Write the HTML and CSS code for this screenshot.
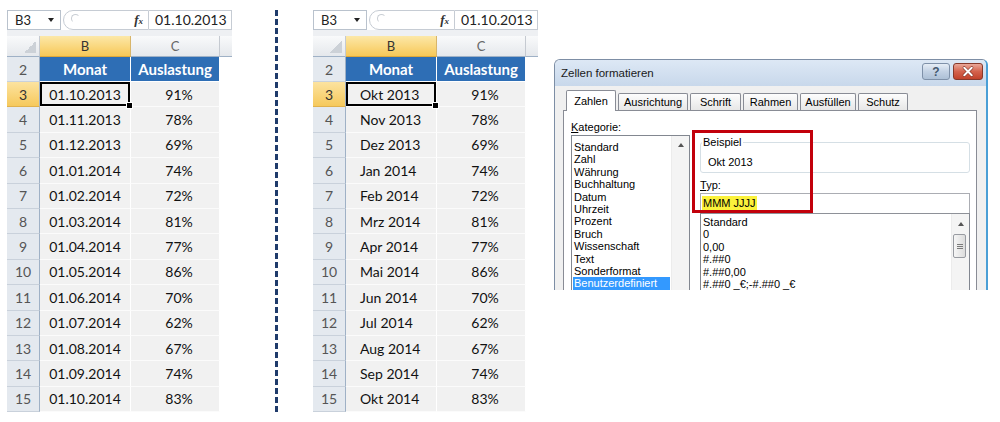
FILE: index.html
```html
<!DOCTYPE html>
<html>
<head>
    <title>Benutzerdefiniertes Datumsformat</title>
    <link rel="stylesheet" href="styles.css">
</head>
<body>
    <div class="page">
        <div class="sheet">
            <div class="formula-bar">
                <div class="name-box">B3<span class="name-arrow"></span></div>
                <div class="fx-area"><span class="knob"></span><span class="fx">f<small>x</small></span></div>
                <div class="formula-text">01.10.2013</div>
            </div>
            <div class="grid" id="sheetDates">
                <div class="col-head corner"></div>
                <div class="col-head active">B</div>
                <div class="col-head">C</div>
                <div class="col-head rest"></div>
                <div class="row-head">2</div>
                <div class="head-cell">Monat</div>
                <div class="head-cell">Auslastung</div>
                <div class="cell rest"></div>
            </div>
        </div>

        <div class="divider"></div>

        <div class="sheet">
            <div class="formula-bar">
                <div class="name-box">B3<span class="name-arrow"></span></div>
                <div class="fx-area"><span class="knob"></span><span class="fx">f<small>x</small></span></div>
                <div class="formula-text">01.10.2013</div>
            </div>
            <div class="grid" id="sheetMonths">
                <div class="col-head corner"></div>
                <div class="col-head active">B</div>
                <div class="col-head">C</div>
                <div class="col-head rest"></div>
                <div class="row-head">2</div>
                <div class="head-cell">Monat</div>
                <div class="head-cell">Auslastung</div>
                <div class="cell rest"></div>
            </div>
        </div>

        <div class="dialog">
            <div class="title-bar">
                <span class="title">Zellen formatieren</span>
                <div class="title-buttons">
                    <span class="tbtn help">?</span>
                    <span class="tbtn close">
                        <svg width="30" height="17" viewBox="0 0 30 17">
                            <path d="M11 4.5 L19 12.5 M19 4.5 L11 12.5" stroke="#7a2a1c" stroke-width="3.4" stroke-linecap="round"/>
                            <path d="M11 4.5 L19 12.5 M19 4.5 L11 12.5" stroke="#fff" stroke-width="2.2" stroke-linecap="round"/>
                        </svg>
                    </span>
                </div>
            </div>
            <div class="dialog-body">
                <div class="tabs">
                    <div class="tab selected" style="width: 50px">Zahlen</div>
                    <div class="tab" style="width: 70px">Ausrichtung</div>
                    <div class="tab" style="width: 51px">Schrift</div>
                    <div class="tab" style="width: 55px">Rahmen</div>
                    <div class="tab" style="width: 56px">Ausfüllen</div>
                    <div class="tab" style="width: 50px">Schutz</div>
                </div>
                <div class="panel">
                    <div class="cat-col">
                        <div class="label"><u>K</u>ategorie:</div>
                        <div class="listbox">
                            <div class="list-items cat-items">
                                <div class="item">Standard</div>
                                <div class="item">Zahl</div>
                                <div class="item">Währung</div>
                                <div class="item">Buchhaltung</div>
                                <div class="item">Datum</div>
                                <div class="item">Uhrzeit</div>
                                <div class="item">Prozent</div>
                                <div class="item">Bruch</div>
                                <div class="item">Wissenschaft</div>
                                <div class="item">Text</div>
                                <div class="item">Sonderformat</div>
                                <div class="item selected">Benutzerdefiniert</div>
                            </div>
                            <div class="scrollbar">
                                <div class="scroll-btn"><span class="arrow-up"></span></div>
                            </div>
                        </div>
                    </div>
                    <div class="type-col">
                        <fieldset class="sample">
                            <legend>Beispiel</legend>
                            <div class="sample-text">Okt 2013</div>
                        </fieldset>
                        <div class="label type-label"><u>T</u>yp:</div>
                        <div class="type-input"><span class="marker">MMM JJJJ</span></div>
                        <div class="listbox type-list">
                            <div class="list-items type-items">
                                <div class="item">Standard</div>
                                <div class="item">0</div>
                                <div class="item">0,00</div>
                                <div class="item">#.##0</div>
                                <div class="item">#.##0,00</div>
                                <div class="item">#.##0 _€;-#.##0 _€</div>
                            </div>
                            <div class="scrollbar">
                                <div class="scroll-btn"><span class="arrow-up"></span></div>
                                <div class="thumb"><span></span><span></span><span></span></div>
                            </div>
                        </div>
                    </div>
                    <div class="callout"></div>
                </div>
            </div>
        </div>
    </div>

    <script>
        const dates = ['01.10.2013', '01.11.2013', '01.12.2013', '01.01.2014', '01.02.2014', '01.03.2014',
            '01.04.2014', '01.05.2014', '01.06.2014', '01.07.2014', '01.08.2014', '01.09.2014', '01.10.2014'];
        const months = ['Okt 2013', 'Nov 2013', 'Dez 2013', 'Jan 2014', 'Feb 2014', 'Mrz 2014',
            'Apr 2014', 'Mai 2014', 'Jun 2014', 'Jul 2014', 'Aug 2014', 'Sep 2014', 'Okt 2014'];
        const load = [91, 78, 69, 74, 72, 81, 77, 86, 70, 62, 67, 74, 83];

        function buildRows(gridId, labels, align) {
            let html = '';
            labels.forEach((label, i) => {
                const row = i + 3;
                const active = row === 3;
                html += `
                    <div class="row-head${active ? ' active' : ''}">${row}</div>
                    <div class="cell ${align}${active ? ' selected' : ''}">${label}</div>
                    <div class="cell pct">${load[i]}%</div>
                    <div class="cell rest"></div>`;
            });
            document.getElementById(gridId).insertAdjacentHTML('beforeend', html);
        }

        buildRows('sheetDates', dates, 'center');
        buildRows('sheetMonths', months, 'left');
    </script>
</body>
</html>
```

FILE: styles.css
```css
body {
    margin: 0;
    padding: 0;
    background-color: #fff;
    font-family: "Liberation Sans", Arial, sans-serif;
}

.page {
    display: flex;
    align-items: flex-start;
    padding: 10px 0 0 7px;
}

/* spreadsheet */

.sheet {
    width: 225px;
    background-color: #eef0f3;
    font-family: Lato, "Liberation Sans", sans-serif;
}

.formula-bar {
    display: flex;
    height: 20px;
    background-color: #fff;
}

.name-box {
    width: 54px;
    box-sizing: border-box;
    border: 1px solid #b9c2cd;
    display: flex;
    align-items: center;
    justify-content: space-between;
    padding: 0 6px 0 7px;
    font-size: 13px;
    color: #222;
}

.name-arrow {
    width: 0;
    height: 0;
    border-left: 3.5px solid transparent;
    border-right: 3.5px solid transparent;
    border-top: 4px solid #222;
}

.fx-area {
    width: 86px;
    margin-left: 2px;
    box-sizing: border-box;
    border: 1px solid #c6ccd4;
    border-radius: 10px 0 0 10px;
    display: flex;
    align-items: center;
    justify-content: space-between;
    padding: 0 5px 0 7px;
}

.knob {
    width: 7px;
    height: 7px;
    border-radius: 50%;
    border: 1px solid #c9ced4;
    border-right-color: transparent;
    border-bottom-color: transparent;
    align-self: flex-start;
    margin-top: 3px;
}

.fx {
    font-family: "Liberation Serif", serif;
    font-style: italic;
    font-weight: bold;
    font-size: 13px;
    color: #333;
}

.fx small {
    font-size: 9px;
}

.formula-text {
    flex: 1;
    border: 1px solid #c6ccd4;
    border-left: none;
    padding-left: 6px;
    font-size: 14px;
    line-height: 18px;
    color: #222;
}

.grid {
    display: grid;
    grid-template-columns: 33px 91px 89px 12px;
    grid-template-rows: 21px 25px;
    grid-auto-rows: 25.4px;
    margin-top: 6px;
}

.grid > div {
    box-sizing: border-box;
    display: flex;
    align-items: center;
    justify-content: center;
}

.col-head {
    background: linear-gradient(#f9fafb, #e5e8ec);
    border-right: 1px solid #c5cad1;
    border-bottom: 1px solid #9fb1c6;
    font-size: 13px;
    color: #666;
}

.col-head.active {
    background: linear-gradient(#fce8a8, #f7c858);
    border-bottom-color: #dfa83a;
    border-right-color: #d8b56a;
    color: #333;
}

.col-head.corner {
    background:
        linear-gradient(135deg, transparent 50%, #ccd1d7 50%) no-repeat right 3px bottom 3px / 12px 12px,
        linear-gradient(#f9fafb, #e5e8ec);
}

.row-head {
    background-color: #e4e9ef;
    border-right: 1px solid #9fb1c6;
    border-bottom: 1px solid #c9d1db;
    font-size: 14px;
    color: #555;
}

.row-head.active {
    background: linear-gradient(#fce3a0, #f6c95c);
    border-bottom-color: #e0b14d;
    color: #333;
}

.head-cell {
    background-color: #2e6eb5;
    border-right: 1px solid #fff;
    border-bottom: 1px solid #fff;
    color: #fff;
    font-weight: bold;
    font-size: 15px;
}

.cell {
    background-color: #f1f1f1;
    border-right: 1px solid #fff;
    border-bottom: 1px solid #fbfbfb;
    font-size: 14px;
    color: #111;
}

.grid > .cell.left {
    justify-content: flex-start;
    padding-left: 14px;
}

.cell.pct {
    padding-left: 8px;
}

.grid > .rest {
    background: #fff;
    border: none;
}

.grid > .col-head.rest {
    background: linear-gradient(#f9fafb, #e5e8ec);
    border-bottom: 1px solid #9fb1c6;
}

.cell.selected {
    position: relative;
    z-index: 1;
    box-shadow: inset 0 0 0 2px #000;
}

.cell.selected::after {
    content: "";
    position: absolute;
    right: -3px;
    bottom: -3px;
    width: 5px;
    height: 5px;
    background: #000;
    border: 1px solid #fff;
}

.divider {
    width: 3px;
    height: 402px;
    margin: 0 35px 0 43px;
    background: repeating-linear-gradient(to bottom, #1f3b6b 0, #1f3b6b 6px, transparent 6px, transparent 9px);
}

/* dialog */

.dialog {
    width: 434px;
    height: 231px;
    margin: 49px 0 0 16px;
    box-sizing: border-box;
    border: 1px solid #7d8ea5;
    border-right: 2px solid #4a9fd6;
    border-bottom: none;
    border-radius: 6px 6px 0 0;
    overflow: hidden;
    background-color: #f0f0f0;
    font-size: 11px;
    color: #000;
}

.title-bar {
    display: flex;
    height: 26px;
    padding-left: 6px;
    background: linear-gradient(#dde8f5, #c8d8eb);
}

.title {
    line-height: 26px;
    font-size: 11.5px;
    color: #1a1a1a;
}

.title-buttons {
    margin-left: auto;
    margin-top: 3px;
    margin-right: 3px;
    display: flex;
    gap: 3px;
}

.tbtn {
    height: 17px;
    box-sizing: border-box;
    border-radius: 3px;
    display: flex;
    align-items: center;
    justify-content: center;
}

.tbtn.help {
    width: 28px;
    border: 1px solid #7f91a9;
    background: linear-gradient(#e6edf6, #c3d2e4 50%, #adc0d6);
    font-weight: bold;
    font-size: 12px;
    color: #44586f;
}

.tbtn.close {
    width: 30px;
    border: 1px solid #86392b;
    background: linear-gradient(#eaa899, #d4634d 50%, #c2432b);
}

.tbtn.close svg {
    display: block;
}

.dialog-body {
    padding: 4px 9px 0 8px;
}

.tabs {
    display: flex;
    align-items: flex-end;
    gap: 2px;
    height: 20px;
    padding-left: 3px;
}

.tab {
    height: 17px;
    box-sizing: border-box;
    border: 1px solid #898c95;
    border-bottom: none;
    border-radius: 2px 2px 0 0;
    background: linear-gradient(#fdfdfd, #e7e7e7);
    text-align: center;
    line-height: 16px;
}

.tab.selected {
    height: 21px;
    margin-bottom: -1px;
    padding-top: 1px;
    line-height: 18px;
    background: #fff;
    position: relative;
    z-index: 1;
}

.panel {
    position: relative;
    display: flex;
    height: 300px;
    padding: 10px 0 0 7px;
    border: 1px solid #898c95;
    background-color: #fff;
}

.label {
    line-height: 13px;
    height: 13px;
    margin-bottom: 1px;
}

.cat-col {
    width: 119px;
}

.listbox {
    display: flex;
    height: 200px;
    box-sizing: border-box;
    border: 1px solid #828790;
}

.list-items {
    flex: 1;
    line-height: 12.4px;
}

.cat-items {
    padding: 5px 1px 0;
}

.cat-items .item {
    padding-left: 1px;
}

.item.selected {
    background-color: #3399ff;
    color: #fff;
}

.scrollbar {
    width: 17px;
    background-color: #f4f4f4;
    border-left: 1px solid #ececec;
}

.scroll-btn {
    height: 17px;
    display: flex;
    align-items: center;
    justify-content: center;
}

.arrow-up {
    width: 0;
    height: 0;
    border-left: 3.5px solid transparent;
    border-right: 3.5px solid transparent;
    border-bottom: 4px solid #555;
}

.type-col {
    width: 270px;
    margin: 15px 0 0 10px;
}

.sample {
    margin: 0;
    min-width: 0;
    padding: 0 0 0 7px;
    border: 1px solid #d5dfe5;
    border-radius: 3px;
}

.sample legend {
    margin-left: -6px;
    padding: 0 1px;
    line-height: 13px;
}

.sample-text {
    padding: 6.5px 0 3px;
    line-height: 13px;
}

.type-label {
    margin-top: 6px;
    margin-bottom: 1.5px;
}

.type-input {
    height: 20px;
    box-sizing: border-box;
    border: 1px solid #abadb3;
    border-bottom: none;
    padding: 2px 0 0 1px;
}

.marker {
    display: inline-block;
    height: 15px;
    line-height: 15px;
    padding: 0 1px;
    background-color: #fbf23c;
}

.type-list {
    border-top-color: #8e9198;
}

.type-items {
    padding: 2px 0 0 2px;
}

.type-list .scrollbar {
    padding-top: 1px;
}

.thumb {
    width: 13px;
    height: 24px;
    margin: 2px 0 0 1px;
    box-sizing: border-box;
    border: 1px solid #989ba1;
    border-radius: 2px;
    background: linear-gradient(to right, #f6f6f6, #dcdcdc);
    display: flex;
    flex-direction: column;
    align-items: center;
    justify-content: center;
    gap: 1px;
}

.thumb span {
    width: 6px;
    height: 1px;
    background-color: #7a7a7a;
}

.callout {
    position: absolute;
    left: 128px;
    top: 19px;
    width: 121px;
    height: 83px;
    box-sizing: border-box;
    border: 3px solid #c2000b;
}
```
